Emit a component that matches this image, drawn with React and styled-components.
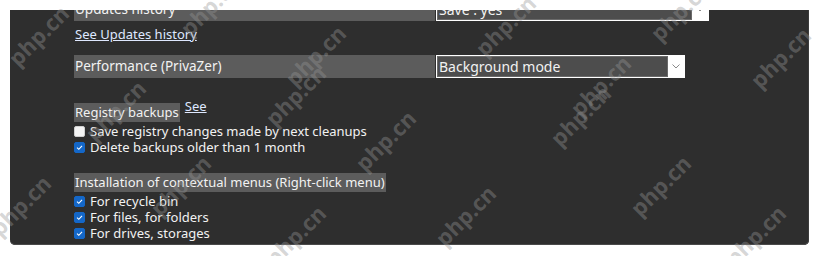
import styled, { createGlobalStyle } from "styled-components";

const GlobalStyle = createGlobalStyle`
  html, body {
    margin: 0;
    padding: 0;
    background: #ffffff;
  }
  body {
    font-family: "Noto Sans", "Open Sans", sans-serif;
  }
`;

const MARKS = [
  [38, 35], [210, 5], [505, 25], [680, 10],
  [315, 55], [780, 57], [295, 95], [600, 85],
  [115, 110], [580, 115], [385, 140],
  [180, 185], [660, 185], [20, 205], [465, 215],
  [295, 235], [755, 235],
];

const App = () => {
  return (
    <Page>
      <GlobalStyle />
      <Panel>
        <Content>
          <ComboRow>
            <Label>Updates history</Label>
            <Combo $width={273}>
              <ComboValue>Save : yes</ComboValue>
              <ComboArrow>
                <Chevron />
              </ComboArrow>
            </Combo>
          </ComboRow>
          <Link>See Updates history</Link>

          <ComboRow $top={13}>
            <Label>Performance (PrivaZer)</Label>
            <Combo $width={249}>
              <ComboValue>Background mode</ComboValue>
              <ComboArrow>
                <Chevron />
              </ComboArrow>
            </Combo>
          </ComboRow>

          <Section $top={25}>
            <HeadLine>
              <Heading>Registry backups</Heading>
              <SmallLink>See</SmallLink>
            </HeadLine>
            <Check label="Save registry changes made by next cleanups" />
            <Check checked label="Delete backups older than 1 month" />
          </Section>

          <Section $top={18}>
            <HeadLine>
              <Heading>Installation of contextual menus (Right-click menu)</Heading>
            </HeadLine>
            <Check checked label="For recycle bin" />
            <Check checked label="For files, for folders" />
            <Check checked label="For drives, storages" />
          </Section>
        </Content>
      </Panel>
      <Marks>
        {MARKS.map(([x, y], i) => (
          <Mark key={i} style={{ left: x - 42, top: y - 14 }}>
            php.cn
          </Mark>
        ))}
      </Marks>
    </Page>
  );
};

const Chevron = () => (
  <svg width="8" height="5" viewBox="0 0 8 5">
    <path d="M0.5 0.5 L4 4 L7.5 0.5" fill="none" stroke="#8a8a8a" strokeWidth="1" />
  </svg>
);

const Check = ({ checked, label }) => (
  <CheckRow>
    <Box $checked={checked}>
      {checked && (
        <svg width="9" height="9" viewBox="0 0 9 9">
          <path d="M2 4.6 L3.8 6.3 L7 2.8" fill="none" stroke="#ffffff" strokeWidth="1.1" />
        </svg>
      )}
    </Box>
    <span>{label}</span>
  </CheckRow>
);

export default App;

const Page = styled.div`
  position: relative;
  width: 820px;
  height: 256px;
  padding: 10px 11px 11px 10px;
  box-sizing: border-box;
  overflow: hidden;
`;

const Panel = styled.div`
  height: 235px;
  background: #2e2e2e;
  border-radius: 0 0 5px 5px;
  box-shadow: inset 0 -1px 0 #4a4a4a, inset -1px 0 0 #3c3c3c;
  overflow: hidden;
`;

const Content = styled.div`
  margin-top: -12px;
  padding-left: 64px;
  color: #f2f2f2;
  font-size: 13px;
`;

const ComboRow = styled.div`
  display: flex;
  align-items: stretch;
  height: 23px;
  margin-top: ${(p) => p.$top || 0}px;
`;

const Label = styled.div`
  width: 360px;
  background: #5c5c5c;
  padding-left: 1px;
  font-size: 13.5px;
  line-height: 23px;
  white-space: nowrap;
`;

const Combo = styled.div`
  width: ${(p) => p.$width}px;
  display: flex;
  border: 1px solid #ffffff;
  box-sizing: border-box;
  margin-left: 1px;
`;

const ComboValue = styled.div`
  flex: 1;
  background: #4d4d4d;
  border: 1px solid #6a6a6a;
  font-size: 14px;
  line-height: 19px;
  padding-left: 1px;
  white-space: nowrap;
`;

const ComboArrow = styled.div`
  width: 16px;
  background: #ffffff;
  display: flex;
  align-items: center;
  justify-content: center;
`;

const Link = styled.div`
  margin: 6px 0 0 1px;
  color: #dfe8ff;
  text-decoration: underline;
  font-size: 13px;
  line-height: 15px;
`;

const Section = styled.div`
  margin-top: ${(p) => p.$top}px;
  display: flex;
  flex-direction: column;
`;

const HeadLine = styled.div`
  display: flex;
  align-items: flex-start;
  gap: 5px;
  margin-bottom: 1px;
`;

const Heading = styled.div`
  background: #5c5c5c;
  padding: 0 1px;
  font-size: 13px;
  line-height: 19px;
  white-space: nowrap;
`;

const SmallLink = styled.div`
  color: #dfe8ff;
  text-decoration: underline;
  font-size: 13px;
  line-height: 13px;
  margin-top: -3px;
`;

const CheckRow = styled.label`
  display: flex;
  align-items: center;
  gap: 5px;
  height: 16px;
  font-size: 13px;
  white-space: nowrap;
`;

const Box = styled.span`
  width: 11px;
  height: 11px;
  box-sizing: border-box;
  border-radius: 2px;
  display: flex;
  align-items: center;
  justify-content: center;
  background: ${(p) => (p.$checked ? "#1467c8" : "#f4f4f4")};
  border: 1px solid ${(p) => (p.$checked ? "#1467c8" : "#cfcfcf")};
`;

const Marks = styled.div`
  position: absolute;
  inset: 0;
  pointer-events: none;
  overflow: hidden;
`;

const Mark = styled.div`
  position: absolute;
  width: 84px;
  height: 28px;
  text-align: center;
  transform: rotate(-45deg);
  font-family: "Open Sans", sans-serif;
  font-weight: 700;
  font-size: 22px;
  line-height: 28px;
  color: rgba(150, 150, 150, 0.4);
`;
